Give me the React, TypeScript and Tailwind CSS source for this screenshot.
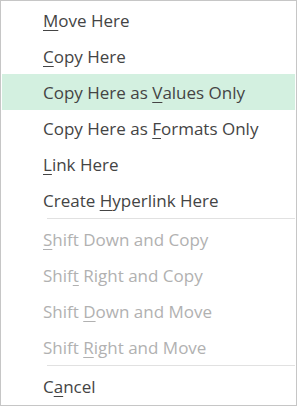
const ITEMS: { pre: string; key: string; post: string; hot?: boolean }[] = [
  { pre: "", key: "M", post: "ove Here" },
  { pre: "", key: "C", post: "opy Here" },
  { pre: "Copy Here as ", key: "V", post: "alues Only", hot: true },
  { pre: "Copy Here as ", key: "F", post: "ormats Only" },
  { pre: "", key: "L", post: "ink Here" },
  { pre: "Create ", key: "H", post: "yperlink Here" },
];

const SHIFT = [
  { pre: "", key: "S", post: "hift Down and Copy" },
  { pre: "Shif", key: "t", post: " Right and Copy" },
  { pre: "Shift ", key: "D", post: "own and Move" },
  { pre: "Shift ", key: "R", post: "ight and Move" },
];

function Row({ pre, key_, post, off, hot }: { pre: string; key_: string; post: string; off?: boolean; hot?: boolean }) {
  return (
    <div className={`flex h-9 items-center pl-[41px] ${hot ? "bg-[#d3f0e0]" : ""} ${off ? "text-[#b1b1b1]" : "text-[#444444]"}`}>
      <span className="whitespace-pre">
        {pre}
        <u className="underline-offset-[3px] decoration-1">{key_}</u>
        {post}
      </span>
    </div>
  );
}

function Sep() {
  return <div className="ml-[45px] h-[3px] border-t border-[#e1e1e1]" />;
}

export default function App() {
  return (
    <div
      className="w-[297px] h-[406px] border border-[#c6c6c6] bg-white p-px text-[17px] leading-none"
      style={{ fontFamily: '"Open Sans", "Noto Sans", sans-serif' }}
    >
      {ITEMS.map((it) => (
        <Row key={it.pre + it.key + it.post} pre={it.pre} key_={it.key} post={it.post} hot={it.hot} />
      ))}
      <Sep />
      {SHIFT.map((it) => (
        <Row key={it.pre + it.key + it.post} pre={it.pre} key_={it.key} post={it.post} off />
      ))}
      <Sep />
      <Row pre="C" key_="a" post="ncel" />
    </div>
  );
}
